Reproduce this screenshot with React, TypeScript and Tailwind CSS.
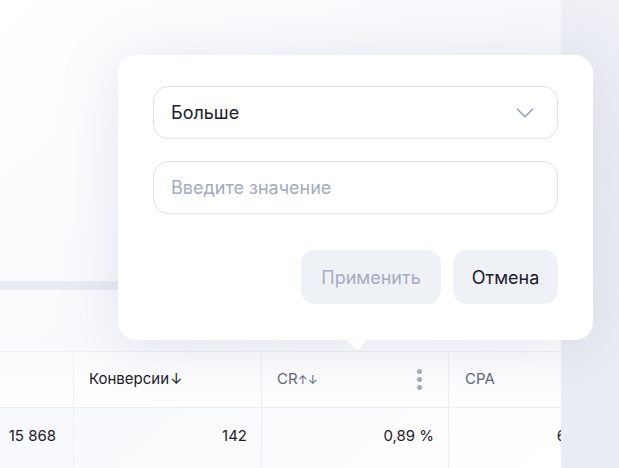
import { ChevronDown } from 'lucide-react'

const font = { fontFamily: 'Inter, "Noto Sans", sans-serif' }

function FilterPopup() {
  return (
    <div className="absolute left-[118px] top-[55px] w-[475px] h-[285px] rounded-[18px] bg-white shadow-[0_4px_60px_rgba(120,130,170,0.18)]">
      {/* arrow */}
      <div className="absolute left-[231px] -bottom-[7px] w-[16px] h-[16px] rotate-45 bg-white rounded-[3px]" />
      <div className="relative flex flex-col px-[35px] pt-[31px]">
        <div className="flex items-center justify-between h-[53px] rounded-[15px] border border-[#dde1ea] pl-[17px] pr-[17px]">
          <span className="text-[18px] text-[#1c2029]">Больше</span>
          <ChevronDown className="w-[30px] h-[30px] text-[#9aa3b5]" strokeWidth={1.4} />
        </div>
        <div className="flex items-center mt-[22px] h-[53px] rounded-[15px] border border-[#dde1ea] pl-[17px]">
          <span className="text-[18px] text-[#a4abbd]">Введите значение</span>
        </div>
        <div className="flex justify-end gap-[12px] mt-[36px]">
          <button type="button" className="h-[54px] w-[140px] rounded-[14px] bg-[#eef1f6] text-[18px] text-[#a5adbf]">
            Применить
          </button>
          <button type="button" className="h-[54px] w-[105px] rounded-[14px] bg-[#eef1f6] text-[18px] text-[#1c2029]">
            Отмена
          </button>
        </div>
      </div>
    </div>
  )
}

export default function App() {
  return (
    <div style={font} className="relative w-[619px] h-[468px] overflow-hidden bg-white flex">
      <div className="w-[561px] flex flex-col bg-gradient-to-br from-white via-[#f8f9fc] to-white">
        <div className="h-[281px]" />
        <div className="h-[9px] bg-[#e8ebf2]" />
        <div className="h-[61px]" />
        {/* table header */}
        <div className="flex h-[57px] border-y border-[#eceef3] text-[15px] bg-gradient-to-b from-[#fbfbfd] to-white">
          <div className="w-[74px] border-r border-[#eceef3]" />
          <div className="w-[188px] border-r border-[#eceef3] flex items-center pl-[15px] text-[#1c2029]">
            Конверсии<span className="ml-[1px]">↓</span>
          </div>
          <div className="w-[187px] border-r border-[#eceef3] flex items-center justify-between pl-[15px] pr-[26px] text-[#5d6679]">
            <span>
              CR<span className="text-[12px]">↑↓</span>
            </span>
            <div className="flex flex-col gap-[3px]">
              <span className="w-[5px] h-[5px] rounded-full bg-[#a3aabb]" />
              <span className="w-[5px] h-[5px] rounded-full bg-[#a3aabb]" />
              <span className="w-[5px] h-[5px] rounded-full bg-[#a3aabb]" />
            </div>
          </div>
          <div className="flex-1 flex items-center pl-[16px] text-[#5d6679]">CPA</div>
        </div>
        {/* data row */}
        <div className="flex flex-1 text-[15px] text-[#1c2029]">
          <div className="w-[74px] border-r border-[#eceef3] flex justify-end pr-[17px] pt-[17px]">15 868</div>
          <div className="w-[188px] border-r border-[#eceef3] flex justify-end pr-[14px] pt-[17px]">142</div>
          <div className="w-[187px] border-r border-[#eceef3] flex justify-end pr-[14px] pt-[17px]">0,89 %</div>
          <div className="flex-1 overflow-hidden flex justify-end pt-[17px]">
            <span className="-mr-[5px]">6</span>
          </div>
        </div>
      </div>
      <div className="flex-1 bg-gradient-to-b from-[#eef0f6] to-[#e9ecf3]" />
      <FilterPopup />
    </div>
  )
}
